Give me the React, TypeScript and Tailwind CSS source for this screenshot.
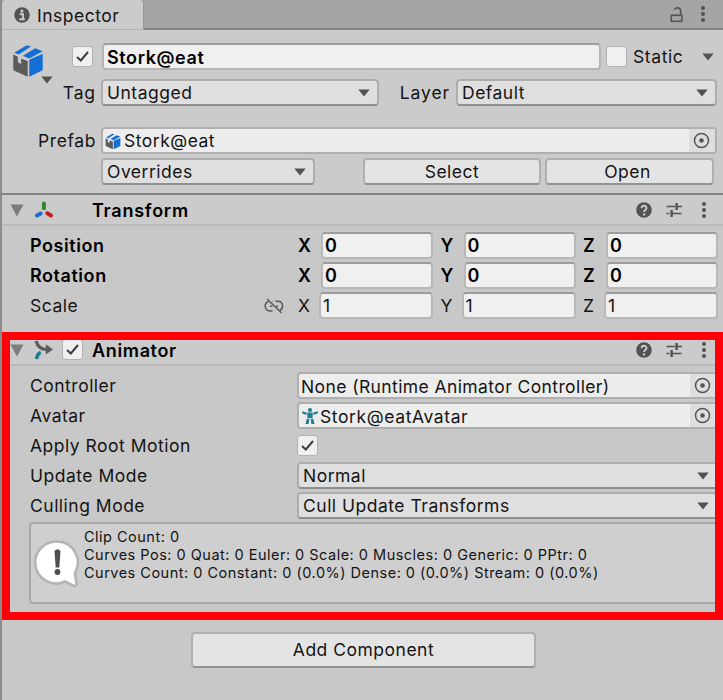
import type { ReactNode } from "react";
import clsx from "clsx";

function Caret({ className }: { className?: string }) {
  return (
    <svg width="12" height="8" viewBox="0 0 12 8" className={clsx("shrink-0", className)}>
      <path d="M0.3 0.5H11.7L6 7.5Z" fill="#53544e" />
    </svg>
  );
}

function Check({ checked, className }: { checked?: boolean; className?: string }) {
  return (
    <span
      className={clsx(
        "flex h-[21px] w-[21px] shrink-0 items-center justify-center rounded-[3px] border border-[#b2b2b2] bg-[#f0f0f0]",
        className
      )}
    >
      {checked && (
        <svg width="15" height="13" viewBox="0 0 15 13">
          <path d="M2 7L5.8 10.5L13 2" fill="none" stroke="#3c3c3c" strokeWidth="2" />
        </svg>
      )}
    </span>
  );
}

function Kebab() {
  return (
    <svg width="6" height="18" viewBox="0 0 6 18" fill="#525252">
      <circle cx="3" cy="3" r="2" />
      <circle cx="3" cy="9" r="2" />
      <circle cx="3" cy="15" r="2" />
    </svg>
  );
}

function PrefabCube({ className }: { className?: string }) {
  return (
    <svg viewBox="36 131 96 104" className={className}>
      <path d="M39 163L53 170V187L63 192V176L83 183V231L39 211Z" fill="#5b5b5b" />
      <path d="M88 179L129 161V211L88 231Z" fill="#136fd6" />
      <path d="M42 158L80 135L93 139L56 163Z" fill="#136fd6" />
      <path d="M68 167L106 144L129 153L88 175Z" fill="#136fd6" />
    </svg>
  );
}

function TransformIcon() {
  return (
    <svg width="20" height="18" viewBox="0 0 20 18" fill="none" strokeWidth="4" strokeLinecap="round">
      <path d="M9.9 2.6V7.2" stroke="#2f8a34" />
      <path d="M6.6 12.5L3 14.5" stroke="#1a6fd4" />
      <path d="M13.3 12.3L17 14.4" stroke="#c01d1d" />
    </svg>
  );
}

function AnimatorIcon() {
  return (
    <svg width="20" height="20" viewBox="0 0 20 20" fill="none">
      <path d="M2 1Q4.5 9.5 13 9.5" stroke="#5c5c5c" strokeWidth="3.2" />
      <path d="M11.8 4.3L19 9.5L11.8 14.6Z" fill="#5c5c5c" />
      <path d="M2.6 19Q3 14.2 6.8 12.4" stroke="#1b7f93" strokeWidth="3.4" />
    </svg>
  );
}

function AvatarIcon() {
  return (
    <svg width="16" height="18" viewBox="0 0 16 18" fill="#1f8092">
      <circle cx="8" cy="3.1" r="2.1" />
      <path d="M0.3 4.2L4.6 5.4L4.4 8L0 6.2Z" />
      <path d="M15.7 4.2L11.4 5.4L11.6 8L16 6.2Z" />
      <path d="M5.2 5.6H10.8L10.6 11.2H5.4Z" />
      <path d="M4.8 11.8L7.4 12.2L6.6 17H3.4Z" />
      <path d="M11.2 11.8L8.6 12.2L9.4 17H12.6Z" />
    </svg>
  );
}

function UnlinkIcon() {
  return (
    <svg width="20" height="16" viewBox="0 0 20 16" fill="none" stroke="#5a5a5a" strokeWidth="1.5">
      <path d="M8.5 13H6C2.8 13 1.2 10.8 1.2 8.3C1.2 6 2.6 4 4.6 3.6M9 3.4H8.6M11.4 3.2H13.6C16.8 3.2 18.6 5.4 18.6 8C18.6 10.4 17.2 12 15.4 12.6M6 8.3H8.4M11.8 8.3H14" />
      <path d="M3 1L17.6 15" />
    </svg>
  );
}

function ComponentActions() {
  return (
    <div className="ml-auto flex items-center pr-4">
      <svg width="16" height="16" viewBox="0 0 16 16">
        <circle cx="8" cy="8" r="7.8" fill="#525252" />
        <path d="M5.6 6.2C5.6 3 10.5 3 10.5 6.1C10.5 8 8.1 7.9 8.1 10" fill="none" stroke="#cbcbcb" strokeWidth="1.9" />
        <circle cx="8.1" cy="12.4" r="1.2" fill="#cbcbcb" />
      </svg>
      <svg width="16" height="16" viewBox="0 0 16 16" className="mr-[19px] ml-[14px]" stroke="#525252" fill="none">
        <path d="M0.5 4.5H9M11 4.5H16M0.5 11.5H3.2M6 11.5H15.5" strokeWidth="1.7" />
        <path d="M10.6 1V8M5.6 8V15" strokeWidth="2.4" />
      </svg>
      <Kebab />
    </div>
  );
}

function Dropdown({ children, className }: { children: ReactNode; className?: string }) {
  return (
    <div
      className={clsx(
        "flex h-[27px] shrink-0 items-center justify-between rounded-[4px] border-2 border-[#adadad] border-b-[#8f8f8f] bg-[#dfdfdf] pr-[7px] pl-[4px]",
        className
      )}
    >
      <span>{children}</span>
      <Caret />
    </div>
  );
}

function ObjectField({ children, className }: { children: ReactNode; className?: string }) {
  return (
    <div
      className={clsx(
        "flex h-[27px] shrink-0 items-stretch overflow-hidden rounded-[4px] border-2 border-[#b0b0b0] bg-[#ededed]",
        className
      )}
    >
      <div className="flex flex-1 items-center pt-px pl-[2px]">{children}</div>
      <div className="flex w-[26px] items-center justify-center bg-[#dedede] pr-px">
        <svg width="17" height="17" viewBox="0 0 17 17">
          <circle cx="8.5" cy="8.5" r="7" fill="none" stroke="#555" strokeWidth="1.5" />
          <circle cx="8.5" cy="8.5" r="2.3" fill="#555" />
        </svg>
      </div>
    </div>
  );
}

function Button({ children, className }: { children: ReactNode; className?: string }) {
  return (
    <button
      className={clsx(
        "flex shrink-0 items-center justify-center rounded-[4px] border-2 border-[#b0b0b0] border-b-[#929292] bg-[#e4e4e4]",
        className
      )}
    >
      {children}
    </button>
  );
}

function VectorRow({ label, value, bold }: { label: string; value: string; bold?: boolean }) {
  return (
    <div
      className={clsx(
        "flex h-[30px] items-start leading-[27px]",
        bold && "text-[18px] font-semibold tracking-[0.55px] text-black"
      )}
    >
      <span className="w-[262px] shrink-0 pl-7">{label}</span>
      <span className="flex h-[27px] w-[34px] shrink-0 items-center">{!bold && <UnlinkIcon />}</span>
      <div className="flex flex-1">
        {["X", "Y", "Z"].map((axis) => (
          <div key={axis} className="flex w-[142.5px] shrink-0">
            <span className={clsx("shrink-0", bold ? "w-[23px]" : "w-[21px]")}>{axis}</span>
            <span
              className={clsx(
                "flex h-[27px] items-center rounded-[4px] border-2 border-[#b8b8b8] border-t-[#9d9d9d] bg-[#f0f0f0] pl-[2px]",
                bold ? "w-[112px]" : "w-[114px]"
              )}
            >
              {value}
            </span>
          </div>
        ))}
      </div>
    </div>
  );
}

function PropertyRow({ label, children }: { label: string; children: ReactNode }) {
  return (
    <div className="flex h-[30px] items-start leading-[27px]">
      <span className="w-[295px] shrink-0 pl-7">{label}</span>
      {children}
    </div>
  );
}

function Foldout() {
  return (
    <svg width="14" height="13" viewBox="0 0 14 13" className="mt-[2px] shrink-0">
      <path d="M0.5 0.5H13.5L7 12.5Z" fill="#7d7d7d" />
    </svg>
  );
}

export default function App() {
  return (
    <div className="relative flex h-[700px] w-[723px] flex-col overflow-hidden border-l-2 border-[#8c8c8c] bg-[#c8c8c8] font-['Inter',sans-serif] text-[17.5px] tracking-[0.5px] whitespace-nowrap text-[#141414]">
      <div className="flex h-[30px] shrink-0 items-stretch bg-[#a5a5a5]">
        <div className="flex w-[142px] items-center rounded-t-[4px] border-r border-b border-r-[#979797] border-b-[#b2b2b2] bg-[#cbcbcb] pt-px pl-[12px]">
          <svg width="16" height="16" viewBox="0 0 16 16">
            <circle cx="8" cy="8" r="7.7" fill="#525252" />
            <circle cx="8" cy="4.1" r="1.6" fill="#cbcbcb" />
            <path d="M5.6 7.2H9V12M5.3 12.2H10.8" fill="none" stroke="#cbcbcb" strokeWidth="1.9" />
          </svg>
          <span className="ml-[7px] pt-[3px]">Inspector</span>
        </div>
        <div className="flex flex-1 items-center justify-end border-b-2 border-[#858585] pr-[17px]">
          <svg width="14" height="17" viewBox="0 0 14 17" fill="none" stroke="#555" strokeWidth="1.6" className="mr-[16px]">
            <rect x="1.3" y="9.3" width="10.6" height="6" />
            <path d="M10.7 9V5.2C10.7 1.3 5.4 0.8 4.6 3.8" />
          </svg>
          <Kebab />
        </div>
      </div>

      <div className="flex h-[163px] shrink-0 flex-col bg-[#cbcbcb] pt-[13px]">
        <div className="flex h-[36px] items-start">
          <div className="relative h-[36px] w-[70px] shrink-0 pt-px pl-[10px]">
            <PrefabCube className="h-[34px] w-[32px]" />
            <Caret className="absolute top-[33px] left-[39px]" />
          </div>
          <Check checked className="mt-[3px]" />
          <div className="ml-[9px] flex h-[27px] w-[499px] shrink-0 items-center rounded-[4px] border-2 border-[#b5b5b5] border-t-[#9d9d9d] bg-[#f0f0f0] pt-px pl-[3px] text-[18px] font-semibold tracking-[0.6px] text-black">
            Stork@eat
          </div>
          <Check className="mt-[3px] ml-[5px]" />
          <span className="ml-[6px] leading-[28px] tracking-[0.6px]">Static</span>
          <Caret className="mt-[10px] mr-[9px] ml-auto" />
        </div>
        <div className="flex h-[48px] items-start leading-[28px]">
          <span className="w-[99px] pr-[5px] text-right tracking-[0.9px]">Tag</span>
          <Dropdown className="w-[278px]">Untagged</Dropdown>
          <span className="w-[77px] pr-[6px] text-right tracking-[0.9px]">Layer</span>
          <Dropdown className="w-[261px]">Default</Dropdown>
        </div>
        <div className="flex h-[31px] items-start leading-[28px]">
          <span className="w-[99px] pr-[5px] text-right tracking-[0.6px]">Prefab</span>
          <ObjectField className="w-[616px]">
            <PrefabCube className="mr-[3px] h-[17px] w-[16px]" />
            Stork@eat
          </ObjectField>
        </div>
        <div className="flex items-start pl-[99px] leading-[24px]">
          <Dropdown className="w-[214px] pt-px">Overrides</Dropdown>
          <Button className="ml-[48px] h-[27px] w-[178px] pt-px">Select</Button>
          <Button className="ml-[4px] h-[27px] w-[169px] pt-px pr-[4px]">Open</Button>
        </div>
      </div>

      <section className="h-[142px] shrink-0 border-t-2 border-[#828282]">
        <div className="mb-[6px] flex h-[31px] items-center border-b-2 border-[#bababa] bg-[#cbcbcb] pl-[8px]">
          <Foldout />
          <span className="ml-[10px]">
            <TransformIcon />
          </span>
          <span className="ml-[38px] pt-[2px] text-[18px] font-semibold tracking-[0.75px] text-black">Transform</span>
          <ComponentActions />
        </div>
        <VectorRow label="Position" value="0" bold />
        <VectorRow label="Rotation" value="0" bold />
        <VectorRow label="Scale" value="1" />
      </section>

      <section className="h-[285px] shrink-0">
        <div className="mb-[6px] flex h-[31px] items-center border-b-2 border-[#bababa] bg-[#cbcbcb] pl-[8px]">
          <Foldout />
          <span className="ml-[10px]">
            <AnimatorIcon />
          </span>
          <Check checked className="ml-[8px] h-[20px] w-[20px]" />
          <span className="ml-[9px] pt-[2px] text-[18px] font-semibold tracking-[0.65px] text-black">Animator</span>
          <ComponentActions />
        </div>
        <PropertyRow label="Controller">
          <ObjectField className="w-[421px] tracking-[0.4px]">None (Runtime Animator Controller)</ObjectField>
        </PropertyRow>
        <PropertyRow label="Avatar">
          <ObjectField className="w-[421px] tracking-[0.6px]">
            <span className="mr-[2px] ml-px">
              <AvatarIcon />
            </span>
            Stork@eatAvatar
          </ObjectField>
        </PropertyRow>
        <PropertyRow label="Apply Root Motion">
          <Check checked className="mt-[3px]" />
        </PropertyRow>
        <PropertyRow label="Update Mode">
          <Dropdown className="w-[421px]">Normal</Dropdown>
        </PropertyRow>
        <PropertyRow label="Culling Mode">
          <Dropdown className="w-[421px]">Cull Update Transforms</Dropdown>
        </PropertyRow>
        <div className="ml-[27px] flex h-[82px] w-[690px] rounded-[4px] border-2 border-[#a9a9a9] bg-[#cfcfcf]">
          <svg width="46" height="50" viewBox="0 0 46 50" className="mt-[15px] ml-[3px]">
            <path
              d="M23.5 2.5A21 21 0 0 1 41 34L42.5 45.5Q42 47.5 40 47L31 42.5A21 21 0 1 1 23.5 2.5Z"
              fill="#fff"
              stroke="#b4b4b4"
              strokeWidth="2.6"
            />
            <path d="M20.5 12Q23.5 8.5 26.5 12L25.3 28.5H21.7Z" fill="#4f4f4f" />
            <circle cx="23.5" cy="33" r="2.9" fill="#4f4f4f" />
          </svg>
          <div className="ml-[4px] pt-[4px] text-[14.5px] leading-[18px] tracking-[0.49px]">
            <p>Clip Count: 0</p>
            <p>Curves Pos: 0 Quat: 0 Euler: 0 Scale: 0 Muscles: 0 Generic: 0 PPtr: 0</p>
            <p>Curves Count: 0 Constant: 0 (0.0%) Dense: 0 (0.0%) Stream: 0 (0.0%)</p>
          </div>
        </div>
      </section>

      <div className="flex pt-[12px] pl-[189px]">
        <Button className="h-[36px] w-[345px] pt-px">Add Component</Button>
      </div>

      {/* highlight around the Animator component */}
      <div className="pointer-events-none absolute top-[332px] left-0 h-[288px] w-[721px] border-8 border-[#fe0008]" />
    </div>
  );
}
